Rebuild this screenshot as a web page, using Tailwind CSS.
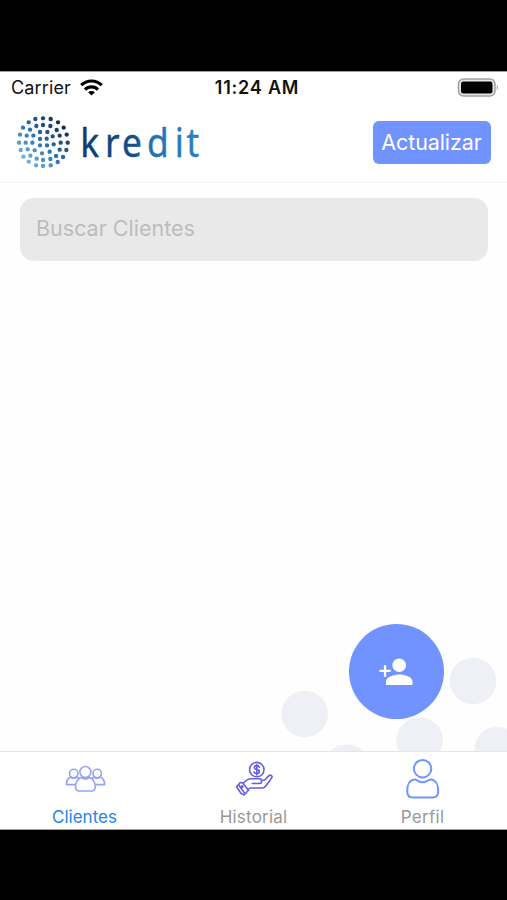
<!DOCTYPE html>
<html lang="es">
<head>
    <meta charset="UTF-8">
    <meta name="viewport" content="width=device-width, initial-scale=1.0">
    <title>Kredit - Clientes</title>
    <script src="https://cdn.jsdelivr.net/npm/@tailwindcss/browser@4"></script>
</head>
<body class="bg-black h-screen overflow-hidden pt-[71px] pb-[70px] font-['Inter',sans-serif]">
    <div class="h-full bg-white flex flex-col overflow-hidden border-t border-b border-gray-400">

        <!-- Status bar -->
        <div class="h-8 shrink-0 grid grid-cols-3 items-center pl-[11px] pr-2 text-[18px] leading-none text-[#111]">
            <div class="flex items-center gap-[9px]">
                <span class="tracking-[0.15px]">Carrier</span>
                <svg class="w-[23px] h-[17px] -mt-0.5" viewBox="0 0 23 17" fill="none" stroke="#000" stroke-width="3.1">
                    <path d="M1.2 6.2a14.6 14.6 0 0 1 20.6 0"/>
                    <path d="M5 10.6a9.2 9.2 0 0 1 13 0"/>
                    <path d="M11.5 16.6l-3.400-3.300a4.800 4.800 0 0 1 6.800 0z" fill="#000" stroke="none"/>
                </svg>
            </div>
            <div class="pl-1 text-center font-semibold whitespace-nowrap tracking-[0.8px]">11:24 AM</div>
            <div class="flex justify-end -mt-0.5">
                <svg class="w-[42px] h-[19px]" viewBox="0 0 42 19">
                    <rect x="1.5" y="1" width="36.500" height="17" rx="5" fill="#e8e8e8" stroke="#a0a0a0" stroke-width="1.5"/>
                    <rect x="4" y="3.5" width="31.500" height="12" rx="2.2"/>
                    <path d="M39.8 6.5q2 3 0 6z" fill="#888"/>
                </svg>
            </div>
        </div>

        <!-- Header -->
        <header class="h-[79px] shrink-0 flex items-center justify-between pl-2.5 pr-4 border-b-2 border-[#f5f5f5]">
            <svg class="w-[196px] h-[65px]" viewBox="0 0 196 65">
                <defs>
                    <linearGradient id="dots" gradientUnits="userSpaceOnUse" x1="45" y1="155" x2="150" y2="45">
                        <stop offset="0" stop-color="#76b7e2"/>
                        <stop offset=".45" stop-color="#2f79b8"/>
                        <stop offset="1" stop-color="#142f5f"/>
                    </linearGradient>
                    <linearGradient id="word" gradientUnits="userSpaceOnUse" x1="78" y1="0" x2="211" y2="0">
                        <stop offset="0" stop-color="#0c3d70"/>
                        <stop offset=".45" stop-color="#144f88"/>
                        <stop offset=".6" stop-color="#2371b2"/>
                        <stop offset="1" stop-color="#2c80c0"/>
                    </linearGradient>
                </defs>
                <path transform="scale(.3333)" fill="none" stroke="url(#dots)" stroke-width="13" stroke-linecap="round" d="M99 25h.1M122 27h.1M76 27h.1M144 37h.1M56 37h.1M161 53h.1M39 53h.1M170 74h.1M30 74h.1M173 98h.1M27 98h.1M169 120h.1M32 120h.1M159 141h.1M40 140h.1M143 156h.1M56 155h.1M122 166h.1M78 166h.1M99 168h.1
                    M99 45h.1M121 48h.1M79 48h.1M140 60h.1M60 59h.1M149 77h.1M50 77h.1M152 98h.1M47 98h.1M149 119h.1M53 118h.1M138 138h.1M61 137h.1M121 147h.1M80 146h.1M99 150h.1
                    M112 66h.1M90 66h.1M128 79h.1M70 77h.1M90 87h.1M110 86h.1M131 103h.1M67 98h.1M90 106h.1M111 106h.1M74 121h.1M96 130h.1M119 125h.1"/>
                <text y="47.5" x="78.4 106.300 125.200 153 184 197.200" transform="scale(.895 1)" fill="url(#word)" stroke="url(#word)" stroke-width=".4" class="font-['Noto_Sans',sans-serif] text-[39.5px]">kredit</text>
            </svg>
            <button class="w-[118px] h-[43px] rounded-[6px] bg-[#7093ff] text-white text-[21.5px] leading-none whitespace-nowrap"><span class="relative left-[-0.5px] tracking-[-0.1px]">Actualizar</span></button>
        </header>

        <!-- Client list -->
        <main class="flex-1 relative overflow-hidden px-5 pt-[15px] bg-[#fefefe]">
            <input type="text" placeholder="Buscar Clientes" class="block w-[468px] h-[63px] rounded-[14px] bg-[#e9e9e9] px-4 pb-1 text-[21.5px] placeholder:text-[#bbbcbe] outline-none">

            <svg class="absolute right-0 bottom-0 w-[237px] h-[141px]" viewBox="270 610 237 141" fill="#eff0f5">
                <circle cx="304.7" cy="714" r="23.3"/>
                <circle cx="473" cy="681" r="23.3"/>
                <circle cx="419.7" cy="740.500" r="23.3"/>
                <circle cx="347" cy="767.500" r="23.3"/>
                <circle cx="497.5" cy="750" r="23.3"/>
            </svg>
            <button aria-label="Agregar cliente" class="absolute right-[63.5px] bottom-[32px] size-[95px] rounded-full bg-[#7093ff]">
                <svg class="size-full" viewBox="0 0 95 95" fill="#fff">
                    <circle cx="50.2" cy="41.3" r="6.8"/>
                    <path d="M37 61v-3.5c0-4.5 8.2-7 13.3-7s13.2 2.5 13.2 7V61z"/>
                    <path d="M34.9 41.3h2.3v4.4h4.5V48h-4.5v4.8h-2.3V48h-4.4v-2.3h4.4z"/>
                </svg>
            </button>
        </main>

        <!-- Tabs -->
        <nav class="h-[78px] shrink-0 grid grid-cols-3 border-t border-[#e6e6e9] text-[17px] leading-none text-[#999]">
            <a class="flex flex-col items-center text-[#1d84f2]">
                <svg class="w-[42px] h-[54px]" viewBox="64 752 42 54" fill="none" stroke="#94a3f5" stroke-width="1.6" stroke-linejoin="round">
                    <circle cx="85.4" cy="772" r="5.5"/>
                    <circle cx="73.7" cy="773.5" r="4.2"/>
                    <circle cx="97.2" cy="773.5" r="4.2"/>
                    <path d="M81.4 777.5c-3.8 1.3-5.8 5-5.8 9.2 0 3 1.2 4.3 3.8 4.3h12c2.6 0 3.8-1.3 3.8-4.3 0-4.2-2-7.9-5.8-9.2-2.3 1.6-5.7 1.6-8 0z"/>
                    <path d="M76.8 777c-1.7 1.2-4.4 1.2-6.2 0-2.8 1.2-4.2 4.2-4.2 7.6h9.5M94 777c1.8 1.2 4.6 1.2 6.3 0 2.9 1.2 4.3 4.2 4.3 7.6h-9.5M76.8 777l2.500 1.500M94 777l-2.400 1.500"/>
                </svg>
                <span class="mt-[3px]">Clientes</span>
            </a>
            <a class="flex flex-col items-center">
                <svg class="w-[42px] h-[54px]" viewBox="233 752 42 54" fill="none" stroke="#665fdf" stroke-width="1.6" stroke-linecap="round" stroke-linejoin="round">
                    <circle cx="256.8" cy="769.6" r="7.2"/>
                    <path d="M259.3 767.3c-.3-1.2-1.3-1.7-2.5-1.7-3.2 0-3.4 3.5 0 4 3.5.5 3.3 4.1 0 4.1-1.5 0-2.5-.7-2.7-2M256.8 764.500v10.500"/>
                    <path d="M243.500 783.2c2.2-3.4 5-4.500 8.300-4.500h7.500c3.2 0 3.2 4.800 0 4.800h-7M261.500 780.500l3.200-.5 4-4.100c2-1.900 4.2.2 2.800 2.200l-5.500 7.700c-1 1.500-2.200 2.200-4 2.200h-11c-1.2 0-2.1.5-3 1.500"/>
                    <path d="M240.300 782.500l2.200.2 6 7.500-4.400 4.800-3.200-1.700-4.300-6.500z"/>
                    <path d="M238.800 785l5.500 7.800"/>
                    <circle cx="242" cy="786.700" r=".8"/>
                </svg>
                <span class="mt-[3px] tracking-[0.2px]">Historial</span>
            </a>
            <a class="flex flex-col items-center">
                <svg class="w-[42px] h-[54px]" viewBox="402 752 42 54" fill="none" stroke="#7093ff" stroke-width="2" stroke-linejoin="round">
                    <circle cx="422.6" cy="768.7" r="8.7"/>
                    <path d="M414.2 779.5c-4.5.5-7 5.5-7 11.7 0 4.2 2 6.3 6 6.3h19c4 0 6-2.1 6-6.3 0-6.2-2.5-11.2-7-11.7-1.7-.2-2.7.8-4.2 1.6-2.7 1.5-6.1 1.5-8.6 0-1.5-.8-2.5-1.8-4.2-1.600z"/>
                </svg>
                <span class="mt-[3px] tracking-[0.3px]">Perfil</span>
            </a>
        </nav>
    </div>
</body>
</html>
